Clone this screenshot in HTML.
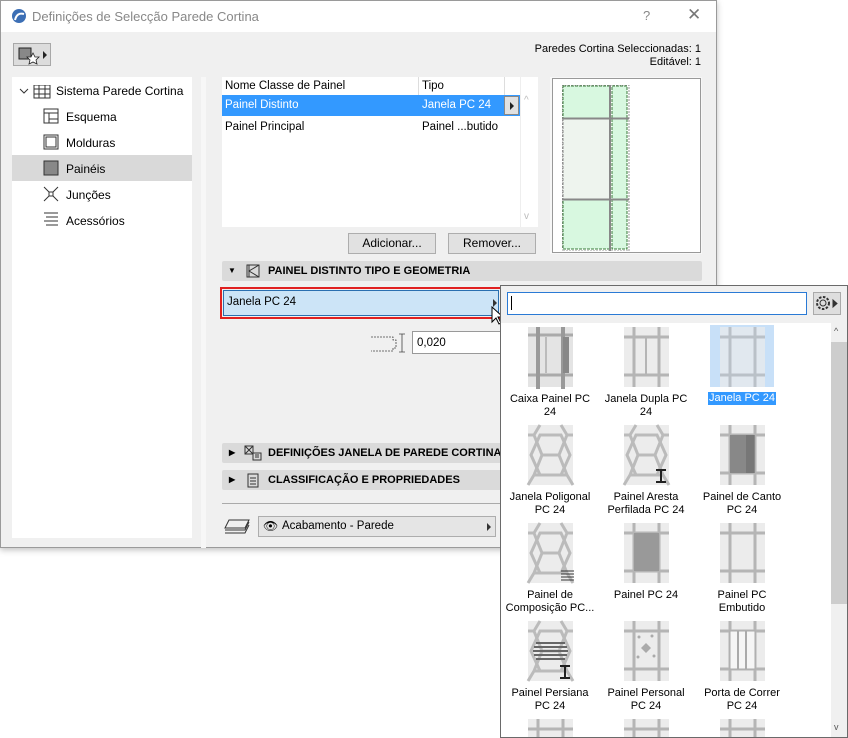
<!DOCTYPE html>
<html><head><meta charset="utf-8"><style>
*{box-sizing:border-box;margin:0;padding:0}
html,body{width:848px;height:738px;overflow:hidden}
body{background:#fff;position:relative;font-family:"Liberation Sans",sans-serif;font-size:11.5px;color:#000}
.a{position:absolute}
.dlg{left:0;top:0;width:717px;height:548px;background:#f0f0f0;border:1px solid #9a9a9a;box-shadow:0 2px 6px rgba(0,0,0,.25)}
.btn{position:absolute;background:#e1e1e1;border:1px solid #adadad;text-align:center;line-height:18px;font-size:12px}
.sec{position:absolute;left:221px;width:480px;height:20px;background:#dadada;border-radius:2px;font-weight:bold;font-size:11px;line-height:20px;overflow:hidden}
.tri{position:absolute;width:0;height:0}
.lbl{position:absolute;width:96px;text-align:center;font-size:11px;line-height:13px}
</style></head><body>
<div class="a dlg">
 <div class="a" style="left:0;top:0;width:715px;height:31px;background:#fff"></div>
 <svg class="a" style="left:10px;top:7px" width="16" height="16"><circle cx="8" cy="8" r="7" fill="#3c6fb5"/><path d="M4 12 Q6 4 13 6" stroke="#fff" stroke-width="2" fill="none"/></svg>
 <div class="a" style="left:31px;top:8px;font-size:13px;color:#888">Definições de Selecção Parede Cortina</div>
 <div class="a" style="left:642px;top:7px;font-size:13px;color:#888">?</div>
 <div class="a" style="left:686px;top:4px;font-size:17px;color:#777">✕</div>
 <div class="a" style="left:12px;top:42px;width:38px;height:23px;background:#dcdcdc;border:1px solid #a8a8a8"></div>
 <svg class="a" style="left:15px;top:44px" width="34" height="20"><rect x="3" y="3" width="12" height="11" fill="#888" stroke="#222"/><path d="M17 8 l2 4 4 0 -3 3 1 4 -4-2 -4 2 1-4 -3-3 4 0z" fill="#fff" stroke="#222" stroke-width=".8"/><path d="M27 6 l4 4 -4 4z" fill="#222"/></svg>
 <div class="a" style="right:15px;top:42px;text-align:right;font-size:11px;line-height:13px">Paredes Cortina Seleccionadas: 1<br>Editável: 1</div>
 <div class="a" style="left:11px;top:76px;width:180px;height:461px;background:#fff"></div>
 <div class="a" style="left:200px;top:76px;width:5px;height:471px;background:#f7f7f7"></div>
 <div class="a" style="left:11px;top:154px;width:180px;height:26px;background:#d9d9d9"></div>
 <svg class="a" style="left:18px;top:84px" width="170" height="146" stroke="#333" fill="none">
  <path d="M1 4 l4 4 4-4"/>
  <rect x="15" y="0" width="16" height="13"/><path d="M20 0v13M26 0v13M15 4h16M15 9h16"/>
  <rect x="25" y="24" width="14" height="14"/><path d="M25 28h14M30 28v10M30 34h9"/>
  <rect x="25" y="50" width="14" height="14"/><rect x="27" y="52" width="10" height="10"/>
  <rect x="25" y="76" width="14" height="14" fill="#888"/>
  <path d="M25 102l14 14M39 102l-14 14"/><rect x="30" y="107" width="4" height="4" fill="#fff"/>
  <path d="M25 128h14M27 132h12M25 136h14M27 140h12"/>
 </svg>
 <div class="a" style="left:55px;top:83px;font-size:12px">Sistema Parede Cortina</div>
 <div class="a" style="left:65px;top:109px;font-size:12px">Esquema</div>
 <div class="a" style="left:65px;top:135px;font-size:12px">Molduras</div>
 <div class="a" style="left:65px;top:161px;font-size:12px">Painéis</div>
 <div class="a" style="left:65px;top:187px;font-size:12px">Junções</div>
 <div class="a" style="left:65px;top:213px;font-size:12px">Acessórios</div>

 <div class="a" style="left:221px;top:76px;width:316px;height:150px;background:#fff"></div>
 <div class="a" style="left:417px;top:76px;width:1px;height:18px;background:#ddd"></div>
 <div class="a" style="left:503px;top:76px;width:1px;height:18px;background:#ddd"></div>
 <div class="a" style="left:519px;top:76px;width:18px;height:150px;background:#fff;border-left:1px solid #eee"></div>
 <div class="a" style="left:224px;top:79px;font-size:11.5px">Nome Classe de Painel</div>
 <div class="a" style="left:421px;top:79px;font-size:11.5px">Tipo</div>
 <div class="a" style="left:221px;top:94px;width:298px;height:21px;background:#3399ff"></div>
 <div class="a" style="left:224px;top:98px;color:#fff;font-size:11.5px">Painel Distinto</div>
 <div class="a" style="left:421px;top:98px;color:#fff;font-size:11.5px">Janela PC 24</div>
 <div class="a" style="left:503px;top:95px;width:15px;height:19px;background:#e1e1e1;border:1px solid #888"></div>
 <div class="tri" style="left:509px;top:101px;border-left:4px solid #222;border-top:4px solid transparent;border-bottom:4px solid transparent"></div>
 <div class="a" style="left:224px;top:120px;font-size:11.5px">Painel Principal</div>
 <div class="a" style="left:421px;top:120px;font-size:11.5px">Painel ...butido</div>
 <div class="a" style="left:523px;top:94px;color:#bbb;font-size:10px">^</div>
 <div class="a" style="left:523px;top:210px;color:#bbb;font-size:10px">v</div>
 <div class="btn" style="left:347px;top:232px;width:88px;height:21px">Adicionar...</div>
 <div class="btn" style="left:447px;top:232px;width:88px;height:21px">Remover...</div>
 <div class="a" style="left:549px;top:76px;width:152px;height:177px;background:#f7f7f7"></div>
 <div class="a" style="left:551px;top:77px;width:149px;height:175px;background:#fff;border:1px solid #999"></div>
 <svg class="a" style="left:561px;top:84px" width="70" height="166">
  <rect x="1" y="1" width="47" height="32" fill="#d8f8e0" stroke="#3a7a3a" stroke-dasharray="3 1"/>
  <rect x="1" y="34" width="47" height="80" fill="#eef4ee" stroke="#888" stroke-dasharray="3 1"/>
  <rect x="1" y="115" width="47" height="49" fill="#d8f8e0" stroke="#3a7a3a" stroke-dasharray="3 1"/>
  <rect x="50" y="1" width="15" height="163" fill="#d8f8e0" stroke="#3a7a3a" stroke-dasharray="3 1"/>
  <rect x="0" y="0" width="67" height="166" fill="none" stroke="#999" stroke-dasharray="2 1"/>
  <path d="M48 0v166M0 33.5h67M0 114.5h67" stroke="#888" stroke-width="2"/>
 </svg>

 <div class="sec" style="top:260px"><span style="position:absolute;left:6px;top:0;font-size:8px">▼</span><svg class="a" style="left:24px;top:3px" width="14" height="14" fill="none" stroke="#333"><rect x="1" y="1" width="12" height="12"/><path d="M13 1 L3 7 13 13M3 1v12"/></svg><span style="position:absolute;left:46px">PAINEL DISTINTO TIPO E GEOMETRIA</span></div>
 <div class="a" style="left:219px;top:286px;width:282px;height:32px;border:2px solid #e02020"></div>
 <div class="a" style="left:222px;top:289px;width:276px;height:26px;background:#cce4f7;border:1px solid #2a6fb0"></div>
 <div class="a" style="left:226px;top:295px;font-size:11.5px">Janela PC 24</div>
 <div class="tri" style="left:492px;top:298px;border-left:4px solid #333;border-top:4px solid transparent;border-bottom:4px solid transparent"></div>
 <svg class="a" style="left:490px;top:305px" width="14" height="20"><path d="M1 1 v15 l4-4 3 6 2-1 -3-6 5 0z" fill="#fff" stroke="#000"/></svg>
 <svg class="a" style="left:369px;top:331px" width="36" height="22" fill="none" stroke="#444" stroke-width=".8"><path d="M1 5h22v3h3v8h-3v3H1" stroke-dasharray="2 1"/><path d="M32 2v18M29 2h6M29 20h6"/></svg>
 <div class="a" style="left:411px;top:330px;width:92px;height:23px;background:#fff;border:1px solid #999;padding:5px 4px;font-size:11.5px">0,020</div>
 <div class="sec" style="top:442px"><span style="position:absolute;left:7px;font-size:8px">▶</span><svg class="a" style="left:22px;top:2px" width="18" height="16" fill="none" stroke="#333"><rect x="1" y="1" width="8" height="8"/><path d="M1 1l8 8M9 1l-8 8"/><rect x="9" y="8" width="8" height="7"/><path d="M11 10h4M11 12h4"/></svg><span style="position:absolute;left:46px">DEFINIÇÕES JANELA DE PAREDE CORTINA</span></div>
 <div class="sec" style="top:469px"><span style="position:absolute;left:7px;font-size:8px">▶</span><svg class="a" style="left:25px;top:3px" width="12" height="15" fill="none" stroke="#333"><rect x="1" y="1" width="10" height="13"/><path d="M3 5h6M3 8h6M3 11h6"/></svg><span style="position:absolute;left:46px">CLASSIFICAÇÃO E PROPRIEDADES</span></div>
 <div class="a" style="left:221px;top:502px;width:480px;height:1px;background:#aaa"></div>
 <svg class="a" style="left:222px;top:517px" width="28" height="18" fill="none" stroke="#333"><path d="M6 2h20l-4 8H2z"/><path d="M2 12h20l4-8M2 15h20l4-8"/></svg>
 <div class="a" style="left:257px;top:515px;width:238px;height:21px;background:#e5e5e5;border:1px solid #adadad"></div>
 <div class="a" style="left:262px;top:518px;font-size:12px">👁</div>
 <div class="a" style="left:281px;top:519px;font-size:11.5px">Acabamento - Parede</div>
 <div class="tri" style="left:486px;top:522px;border-left:4px solid #333;border-top:4px solid transparent;border-bottom:4px solid transparent"></div>
</div>

<div class="a" style="left:500px;top:285px;width:348px;height:453px;background:#f0f0f0;border:1px solid #6a6a6a"></div>
<div class="a" style="left:501px;top:323px;width:330px;height:414px;background:#fff"></div>
<div class="a" style="left:507px;top:292px;width:300px;height:23px;background:#fff;border:1px solid #2a7ad5"></div>
<div class="a" style="left:511px;top:296px;width:1px;height:14px;background:#000"></div>
<div class="a" style="left:813px;top:292px;width:28px;height:23px;background:#dedede;border:1px solid #aaa"></div>
<svg class="a" style="left:815px;top:294px" width="24" height="19" fill="none" stroke="#333"><circle cx="8" cy="9" r="3"/><circle cx="8" cy="9" r="6" stroke-dasharray="2.5 1.5" stroke-width="2"/><path d="M18 6l4 3.5-4 3.5z" fill="#333"/></svg>
<div class="a" style="left:831px;top:323px;width:16px;height:414px;background:#f0f0f0"></div>
<div class="a" style="left:831px;top:342px;width:16px;height:262px;background:#cdcdcd"></div>
<div class="a" style="left:834px;top:326px;font-size:9px;color:#555">^</div>
<div class="a" style="left:834px;top:722px;font-size:9px;color:#555">v</div>

<svg class="a" style="left:501px;top:323px" width="330" height="414">
 <defs>
  <g id="grid"><rect width="45" height="60" fill="#ececec"/><path d="M0 10h45M0 48h45M10 0v60M35 0v60" stroke="#b5b5b5" stroke-width="3"/></g>
  <g id="hex"><rect width="45" height="60" fill="#ececec"/><path d="M12 0l-6 10 -6 0M33 0l6 10 6 0M6 10l-6 0M6 10l8 20-8 20M39 10l-8 20 8 20M14 30h17M6 50l-6 10M39 50l6 10M6 50h33" stroke="#bbb" stroke-width="3" fill="none"/><path d="M12 10 L33 10 42 30 33 50 12 50 3 30z" stroke="#bbb" stroke-width="3" fill="none"/></g>
 </defs>
 <g transform="translate(27,4)"><rect width="45" height="60" fill="#e4e4e4"/><path d="M0 8h45M0 48h45" stroke="#aaa" stroke-width="3"/><path d="M10 0v62M35 0v62" stroke="#999" stroke-width="4"/><rect x="35" y="10" width="6" height="36" fill="#888"/><path d="M18 10v36" stroke="#bbb" stroke-width="2"/></g>
 <g transform="translate(123,4)"><use href="#grid"/><path d="M22 10v38" stroke="#b5b5b5" stroke-width="2"/></g>
 <rect x="209" y="2" width="64" height="62" fill="#c8e0f8"/>
 <g transform="translate(219,4)" opacity=".7"><use href="#grid"/></g>
 <g transform="translate(27,102)"><use href="#hex"/></g>
 <g transform="translate(123,102)"><use href="#hex"/><path d="M32 45h10M32 57h10M37 45v12" stroke="#222" stroke-width="2"/></g>
 <g transform="translate(219,102)"><use href="#grid"/><rect x="10" y="10" width="25" height="38" fill="#888"/><rect x="26" y="10" width="8" height="38" fill="#777"/></g>
 <g transform="translate(27,200)"><use href="#hex"/><path d="M33 48h13M33 51h13M33 54h13M33 57h13" stroke="#333"/></g>
 <g transform="translate(123,200)"><use href="#grid"/><rect x="10" y="10" width="25" height="38" fill="#999"/></g>
 <g transform="translate(219,200)"><use href="#grid"/></g>
 <g transform="translate(27,298)"><use href="#hex"/><path d="M8 22h29M6 26h33M5 30h35M6 34h33M8 38h29" stroke="#666" stroke-width="2"/><path d="M32 45h10M32 57h10M37 45v12" stroke="#222" stroke-width="2"/></g>
 <g transform="translate(123,298)"><use href="#grid"/><path d="M22 22l5 5-5 5-5-5z" fill="#aaa"/><circle cx="15" cy="16" r="1.5" fill="#aaa"/><circle cx="28" cy="15" r="1.5" fill="#aaa"/><circle cx="14" cy="36" r="1.5" fill="#aaa"/><circle cx="30" cy="35" r="1.5" fill="#aaa"/></g>
 <g transform="translate(219,298)"><use href="#grid"/><rect x="10" y="10" width="25" height="38" fill="#f5f5f5" stroke="#aaa"/><path d="M18 10v38M26 10v38" stroke="#aaa" stroke-width="2"/></g>
 <g transform="translate(27,396)"><use href="#grid"/></g>
 <g transform="translate(123,396)"><use href="#grid"/></g>
 <g transform="translate(219,396)"><use href="#grid"/></g>
</svg>
<div class="lbl" style="left:502px;top:393px">Caixa Painel PC<br>24</div>
<div class="lbl" style="left:598px;top:393px">Janela Dupla PC<br>24</div>
<div class="a" style="left:708px;top:392px;background:#3399ff;color:#fff;font-size:11px;line-height:13px;padding:0 1px">Janela PC 24</div>
<div class="lbl" style="left:502px;top:491px">Janela Poligonal<br>PC 24</div>
<div class="lbl" style="left:598px;top:491px">Painel Aresta<br>Perfilada PC 24</div>
<div class="lbl" style="left:694px;top:491px">Painel de Canto<br>PC 24</div>
<div class="lbl" style="left:502px;top:589px">Painel de<br>Composição PC...</div>
<div class="lbl" style="left:598px;top:589px">Painel PC 24</div>
<div class="lbl" style="left:694px;top:589px">Painel PC<br>Embutido</div>
<div class="lbl" style="left:502px;top:687px">Painel Persiana<br>PC 24</div>
<div class="lbl" style="left:598px;top:687px">Painel Personal<br>PC 24</div>
<div class="lbl" style="left:694px;top:687px">Porta de Correr<br>PC 24</div>
</body></html>
